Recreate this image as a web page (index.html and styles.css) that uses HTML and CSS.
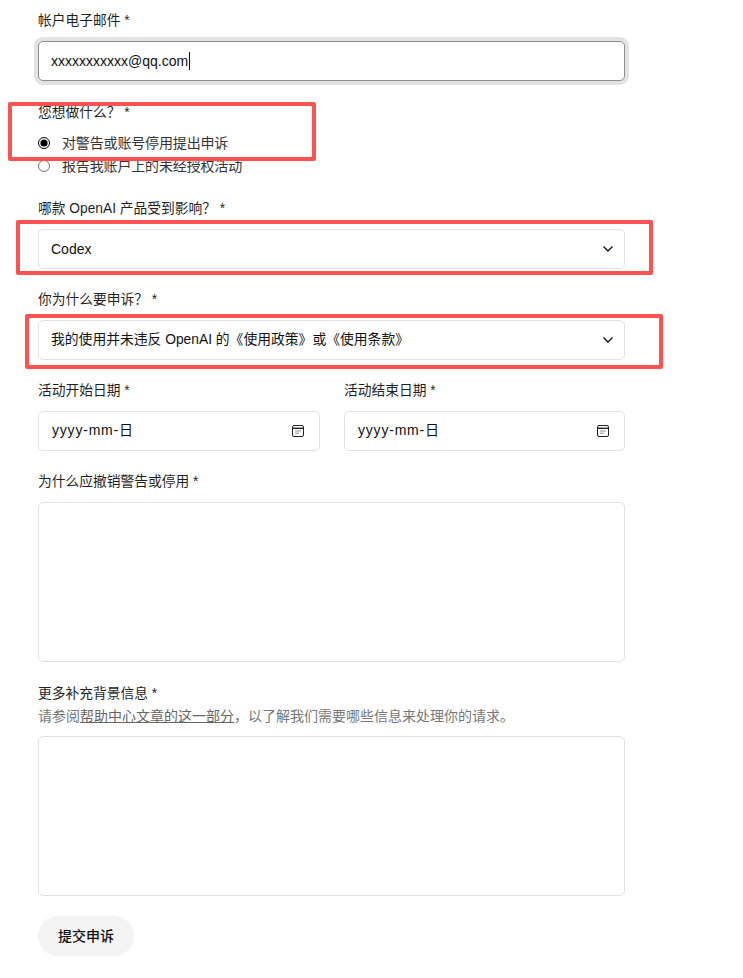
FILE: index.html
```html
<!DOCTYPE html>
<html lang="zh-CN">

<head>
  <meta charset="utf-8">
  <title>提交申诉</title>
  <link rel="stylesheet" href="styles.css">
</head>

<body>
  <form class="appeal-form">
    <div class="field field-email">
      <label class="field-label">帐户电子邮件 *</label>
      <div class="control control-focus">xxxxxxxxxxx@qq.com<span class="caret"></span></div>
    </div>

    <div class="field field-radios">
      <div class="field-label">您想做什么？ *</div>
      <label class="radio radio-first"><input type="radio" name="action" checked> 对警告或账号停用提出申诉</label>
      <label class="radio"><input type="radio" name="action"> 报告我账户上的未经授权活动</label>
    </div>

    <div class="field field-product">
      <label class="field-label">哪款 OpenAI 产品受到影响？ *</label>
      <div class="control control-select">
        <span>Codex</span>
        <svg class="chevron" width="12" height="8" viewBox="0 0 12 8"><path d="M2.5 1.5 7 6l4.5-4.5" fill="none" stroke="#111" stroke-width="1.4"/></svg>
      </div>
    </div>

    <div class="field field-reason">
      <label class="field-label">你为什么要申诉？ *</label>
      <div class="control control-select">
        <span class="select-long">我的使用并未违反 OpenAI 的《使用政策》或《使用条款》</span>
        <svg class="chevron" width="12" height="8" viewBox="0 0 12 8"><path d="M2.5 1.5 7 6l4.5-4.5" fill="none" stroke="#111" stroke-width="1.4"/></svg>
      </div>
    </div>

    <div class="date-row">
      <div class="field">
        <label class="field-label">活动开始日期 *</label>
        <div class="control control-select">
          <span class="date-text">yyyy-mm-日</span>
          <svg class="calendar" width="14" height="14" viewBox="0 0 14 14"><rect x="1.5" y="1.5" width="11" height="11" rx="1.5" fill="none" stroke="#222"/><path d="M1.5 4.3h11" stroke="#222" stroke-width="1.4"/><path d="M4.5 7h1M6.5 7h1M8.5 7h1M4.5 9.2h1M6.5 9.2h1" stroke="#222"/></svg>
        </div>
      </div>
      <div class="field">
        <label class="field-label">活动结束日期 *</label>
        <div class="control control-select">
          <span class="date-text">yyyy-mm-日</span>
          <svg class="calendar" width="14" height="14" viewBox="0 0 14 14"><rect x="1.5" y="1.5" width="11" height="11" rx="1.5" fill="none" stroke="#222"/><path d="M1.5 4.3h11" stroke="#222" stroke-width="1.4"/><path d="M4.5 7h1M6.5 7h1M8.5 7h1M4.5 9.2h1M6.5 9.2h1" stroke="#222"/></svg>
        </div>
      </div>
    </div>

    <div class="field field-why">
      <label class="field-label">为什么应撤销警告或停用 *</label>
      <textarea class="control control-area"></textarea>
    </div>

    <div class="field field-more">
      <label class="field-label">更多补充背景信息 *</label>
      <p class="help">请参阅<a href="#">帮助中心文章的这一部分</a>，以了解我们需要哪些信息来处理你的请求。</p>
      <textarea class="control control-area"></textarea>
    </div>

    <button class="submit" type="button">提交申诉</button>
  </form>

  <div class="mark mark-1"></div>
  <div class="mark mark-2"></div>
  <div class="mark mark-3"></div>
</body>

</html>
```

FILE: styles.css
```css
* {
  box-sizing: border-box;
}

html,
body {
  height: 978px;
  overflow: hidden;
}

body {
  position: relative;
  margin: 0;
  background-color: #fff;
  font-family: "Liberation Sans", "Noto Sans CJK SC", sans-serif;
  font-size: 14px;
  line-height: 20px;
  color: #1f1f1f;
}

.appeal-form {
  width: 587px;
  margin-left: 38px;
  padding-top: 10px;
}

.field-label {
  display: block;
  height: 21px;
  margin-bottom: 10px;
  padding-top: 1px;
  font-size: 13.75px;
}

.control {
  display: block;
  width: 100%;
  height: 40px;
  padding: 9px 12px;
  border: 1px solid #e3e3e3;
  border-radius: 5px;
  background: #fff;
  font: inherit;
  color: #111;
}

.control-focus {
  border-color: #8f8f8f;
  box-shadow: 0 0 0 4px #e3e3e3;
}

.caret {
  display: inline-block;
  width: 1px;
  height: 18px;
  margin-left: 1px;
  background: #111;
  vertical-align: -4px;
}

.control-select {
  display: flex;
  align-items: center;
  justify-content: space-between;
}

.control-select .chevron {
  margin-right: -1px;
  margin-left: auto;
}

.select-long {
  font-size: 13.8px;
}

.date-text {
  margin: 0 0 2px 1px;
  letter-spacing: .8px;
}

.calendar {
  margin-right: 2px;
}

.control-area {
  height: 160px;
  resize: none;
}

.field-radios {
  margin-top: 21px;
}

.radio {
  display: flex;
  align-items: center;
  height: 23px;
  letter-spacing: -.15px;
  color: #333;
}

.radio-first {
  margin-top: -2px;
}

.radio input {
  width: 12px;
  height: 12px;
  margin: 0 12px 0 0;
  accent-color: #000;
}

.field-product {
  margin-top: 21px;
}

.field-reason {
  margin-top: 20px;
}

.date-row {
  display: grid;
  grid-template-columns: 282px 281px;
  gap: 24px;
  margin-top: 20px;
}

.field-why {
  margin-top: 20px;
}

.field-more {
  margin-top: 21px;
}

.field-more .field-label {
  margin-bottom: 2px;
}

.help {
  margin: 0 0 10px;
  color: #777;
}

.help a {
  color: #666;
}

.submit {
  display: block;
  width: 96px;
  height: 40px;
  margin-top: 20px;
  border: 0;
  border-radius: 20px;
  background: #f4f4f4;
  font: inherit;
  font-weight: 500;
  color: #111;
}

.mark {
  position: absolute;
  border: 4px solid #fb5252;
  border-radius: 2px;
}

.mark-1 {
  left: 8px;
  top: 102px;
  width: 308px;
  height: 59px;
}

.mark-2 {
  left: 16px;
  top: 220px;
  width: 637px;
  height: 55px;
}

.mark-3 {
  left: 25px;
  top: 314px;
  width: 638px;
  height: 55px;
}
```
